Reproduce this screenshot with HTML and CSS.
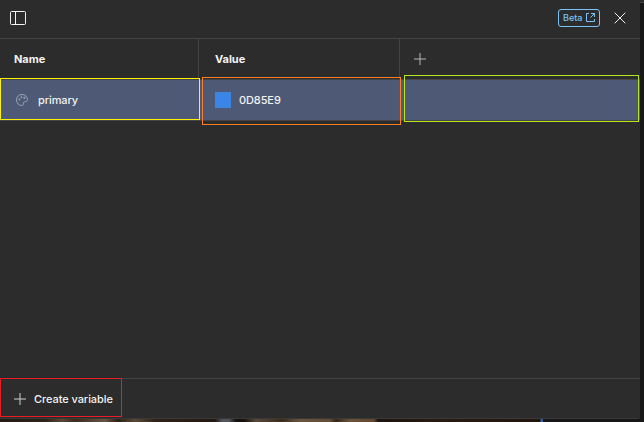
FILE: index.html
```html
<!DOCTYPE html>
<html lang="en">
<head>
<meta charset="utf-8">
<title>Local variables</title>
<link rel="stylesheet" href="styles.css">
</head>
<body>
<main class="panel">
  <header class="topbar">
    <svg class="sidebar-icon" width="16" height="14" viewBox="0 0 16 14"><rect x=".5" y=".5" width="15" height="13" rx="1"/><path d="M5.5 .5v13"/></svg>
    <div class="actions">
      <a class="beta">Beta
        <svg width="9" height="9" viewBox="0 0 9 9"><path d="M3 .5H.5v8h8V6M5 .5h3.500V4M8.400 .6L4.500 4.500"/></svg>
      </a>
      <svg class="close" width="12" height="12" viewBox="0 0 12 12"><path d="M.7 .7l10.6 10.6M11.3 .7L.7 11.3"/></svg>
    </div>
  </header>
  <section class="table">
    <div class="row head">
      <div class="cell">Name</div>
      <div class="cell">Value</div>
      <div class="cell"><svg class="plus dim" width="12" height="12" viewBox="0 0 12 12"><path d="M6 0v12M0 6h12"/></svg></div>
    </div>
    <div class="row selected">
      <div class="cell name">
        <svg class="palette" width="12" height="12" viewBox="0 0 12 12"><path d="M6 .5C2.900 .5 .5 2.900 .5 6c0 3 2.200 5.500 5.300 5.500 1.200 0 1.800-.7 1.700-1.800C7.400 8.300 8 7.600 9.300 7.600c1.500 0 2.200-.5 2.200-1.800C11.400 2.800 9 .5 6 .5Z"/><circle cx="3.400" cy="5.400" r=".6"/><circle cx="5.500" cy="3.200" r=".6"/><circle cx="8.400" cy="3.900" r=".7"/></svg>
        <span>primary</span>
      </div>
      <div class="cell value"><i class="swatch"></i><span>0D85E9</span></div>
      <div class="cell"></div>
    </div>
  </section>
  <footer class="footer">
    <svg class="plus dim" width="12" height="12" viewBox="0 0 12 12"><path d="M6 0v12M0 6h12"/></svg>
    <span>Create variable</span>
  </footer>
</main>
<div class="canvas-strip"></div>
<div class="outline yellow"></div>
<div class="outline orange"></div>
<div class="outline green"></div>
<div class="outline red"></div>
</body>
</html>
```
FILE: styles.css
```css
* { box-sizing: border-box; }
body {
  position: relative;
  width: 644px;
  height: 422px;
  margin: 0;
  overflow: hidden;
  background: linear-gradient(#2c2c2c 2px, #454545 2px, #454545 3px, #181818 3px);
  color: #f2f2f2;
  font: 500 11px/16px Inter, "Liberation Sans", sans-serif;
}
svg { display: block; flex: none; fill: none; stroke: #f2f2f2; }
.panel {
  display: flex;
  flex-direction: column;
  width: 640px;
  height: 419px;
  background: #2c2c2c;
  border-bottom: 1px solid #393939;
  border-radius: 0 0 2px 0;
}
.topbar {
  display: flex;
  align-items: center;
  justify-content: space-between;
  height: 39px;
  padding: 0 14px 3px 10px;
  border-bottom: 1px solid #444;
}
.actions { display: flex; align-items: center; gap: 14px; }
.beta {
  display: flex;
  align-items: center;
  justify-content: space-between;
  width: 42px;
  height: 18px;
  padding: 0 4px;
  border: 1px solid #7cc4f8;
  border-radius: 3px;
  color: #7cc4f8;
  font-size: 9px;
}
.beta svg { stroke: #7cc4f8; }
.row { display: grid; grid-template-columns: 199px 201px 1fr; border-bottom: 1px solid #444; }
.cell { display: flex; align-items: center; padding-left: 15px; border-right: 1px solid #444; }
.cell:first-child { padding-left: 14px; }
.cell:nth-child(2) { padding-left: 16px; }
.cell:last-child { padding-left: 14px; border-right: 0; }
.head { height: 41px; font-weight: 700; letter-spacing: -.03px; }
.selected { height: 41px; background: #4d5975; letter-spacing: -.1px; }
.selected .cell { border-color: #4d5975; }
.selected .cell:nth-child(2) { border-color: #555a69; }
.palette { margin: 0 10px 0 2px; stroke: #a5abba; stroke-width: .9; }
.swatch { width: 16px; height: 16px; margin-right: 8px; background: #3b85e9; }
.dim { stroke: #b8b8b8; }
.footer {
  display: flex;
  align-items: center;
  gap: 8px;
  height: 40px;
  margin-top: auto;
  padding: 0 0 0 14px;
  border-top: 1px solid #444;
  letter-spacing: -.07px;
}
.footer .plus { stroke: #d0d0d0; }
.canvas-strip {
  width: 644px;
  height: 3px;
  background: linear-gradient(90deg, #241a12 0, #2e2318 45px, #5a4835 62px, #3b2c1e 75px, #655541 105px, #2b2118 118px, #5a4935 135px, #30231a 155px, #241810 215px, #50535a 222px, #50535a 229px, #15110e 236px, #15110e 244px, #594936 256px, #3b2b1c 282px, #6b5540 300px, #624c35 330px, #33251a 336px, #6b543a 350px, #60482f 374px, #1c140f 378px, #281b11 440px, #21150e 540px, #2f5fa4 541px, #2f5fa4 543px, #171717 543px);
}
.outline { position: absolute; border: 1px solid; pointer-events: none; }
.yellow { left: 0; top: 78px; width: 200px; height: 42px; border-color: #fff200; }
.orange { left: 202px; top: 77px; width: 199px; height: 48px; border-color: #ff7f27; }
.green { left: 404px; top: 75px; width: 235px; height: 47px; border-color: #b5e61d; }
.red { left: 0; top: 378px; width: 122px; height: 39px; border-color: #ed1c24; }
```
